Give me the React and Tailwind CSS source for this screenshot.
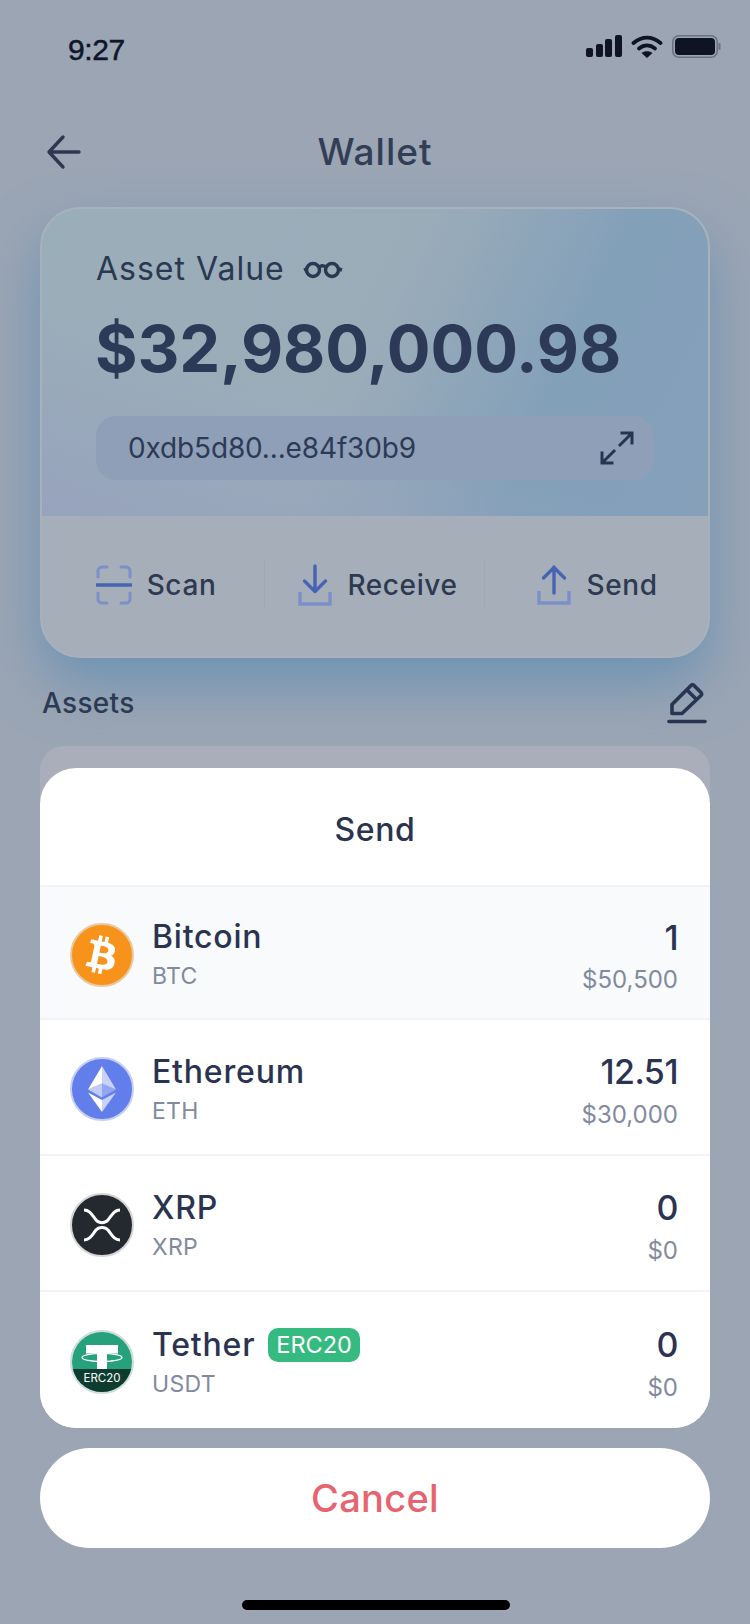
import React from 'react';
import { FaBtc } from 'react-icons/fa';

const StatusBar = () => (
  <div className="flex items-center justify-between h-[100px] pl-[68px] pr-[29px]">
    <span className="pb-[2px] font-['Liberation_Sans',sans-serif] text-[30px] tracking-[-0.4px] text-[#10162a] [-webkit-text-stroke:0.5px_#10162a]">9:27</span>
    <div className="flex items-center gap-[9px] pb-[8px]">
      <div className="flex items-end gap-[2.7px] h-[22px]">
        <div className="w-[7px] h-[9px] rounded-[2px] bg-[#0f1424]" />
        <div className="w-[7px] h-[13px] rounded-[2px] bg-[#0f1424]" />
        <div className="w-[7px] h-[18px] rounded-[2px] bg-[#0f1424]" />
        <div className="w-[7px] h-[22px] rounded-[2px] bg-[#0f1424]" />
      </div>
      <svg width="32" height="23" viewBox="0 0 32 23" fill="none" stroke="#0f1424" strokeWidth="3.800" strokeLinecap="round">
        <path d="M2.500 8C11 1 21 1 29.500 8" />
        <path d="M8 13.500C13 9.500 19 9.500 24 13.500" />
        <path d="M16 23l-5.500-5c3-2.500 8-2.500 11 0z" fill="#0f1424" stroke="none" />
      </svg>
      <svg width="49" height="23" viewBox="0 0 49 23">
        <rect x="0.800" y="0.800" width="44.400" height="21.400" rx="6" fill="none" stroke="#6b7280" strokeWidth="1.600" />
        <rect x="3" y="3" width="40" height="17" rx="4" fill="#0f1424" />
        <rect x="46.500" y="8" width="2" height="7" rx="1" fill="#6b7280" />
      </svg>
    </div>
  </div>
);

const ScanIcon = () => (
  <svg width="36" height="40" viewBox="0 0 36 40" fill="none" strokeWidth="3" strokeLinecap="round">
    <path d="M2 12V6a4 4 0 0 1 4-4h5M25 2h5a4 4 0 0 1 4 4v6M2 28v6a4 4 0 0 0 4 4h5M25 38h5a4 4 0 0 0 4-4v-6" stroke="#7b90c8" />
    <path d="M1 20h34" stroke="#4763b4" strokeWidth="3.600" />
  </svg>
);

const ReceiveIcon = () => (
  <svg width="34" height="42" viewBox="0 0 34 42" fill="none" strokeWidth="3.400" strokeLinecap="round" strokeLinejoin="round">
    <path d="M2 28v12h30V28" stroke="#7b90c8" strokeLinecap="butt" strokeLinejoin="miter" />
    <path d="M17 2v25M6.500 17L17 27.500 27.500 17" stroke="#4763b4" />
  </svg>
);

const SendIcon = () => (
  <svg width="34" height="40" viewBox="0 0 34 40" fill="none" strokeWidth="3.400" strokeLinecap="round" strokeLinejoin="round">
    <path d="M2 26v12h30V26" stroke="#7b90c8" strokeLinecap="butt" strokeLinejoin="miter" />
    <path d="M17 28V2M6.500 13L17 2.500 27.500 13" stroke="#4763b4" />
  </svg>
);

const Action = ({ icon, label, className }) => (
  <div className={`flex items-center justify-center gap-[15px] ${className}`}>
    {icon}
    <span className="text-[28px] font-medium tracking-[0.6px] text-[#2e3a52]">{label}</span>
  </div>
);

const WalletCard = () => (
  <div className="mx-10 h-[451px] rounded-[40px] overflow-hidden border-2 border-[#a7b2bd] bg-[#a6aeba] shadow-[0_26px_56px_-2px_#6b92b3]">
    <div className="h-[307px] pt-[37px] pl-[54px] bg-[linear-gradient(20deg,#97a3bd_0%,rgba(151,163,189,0)_40%),linear-gradient(115deg,#9aaeb9_0%,#9bacb9_48%,#83a0b9_74%,#86a0ba_100%)]">
      <div className="flex items-center gap-[18px] h-[46px]">
        <span className="text-[32px] tracking-[1px] text-[#2a3852]">Asset Value</span>
        <svg width="40" height="22" viewBox="0 0 40 22" fill="none" stroke="#2a3852" strokeWidth="3.500">
          <circle cx="10" cy="12" r="6.500" />
          <circle cx="29" cy="12" r="6.500" />
          <path d="M16 9c2-1.500 5-1.500 7 0M3.500 11L1 12M35.500 11L39 12" />
        </svg>
      </div>
      <div className="mt-[18px] -ml-[1px] h-[78px] flex items-center text-[65px] font-bold tracking-[-0.1px] text-[#2c3a57] whitespace-nowrap">$32,980,000.98</div>
      <div className="mt-[28px] h-[64px] w-[558px] rounded-[20px] flex items-center justify-between pl-[32px] pr-[20px] bg-[#8f9fb8]">
        <span className="text-[28px] tracking-[-0.15px] text-[#2d3a56]">0xdb5d80...e84f30b9</span>
        <svg width="34" height="34" viewBox="0 0 34 34" fill="none" stroke="#263450" strokeWidth="3" strokeLinecap="square">
          <path d="M22 2h10v10M31 3L20 14M2 22v10h10M3 31l11-11" />
        </svg>
      </div>
    </div>
    <div className="flex items-center h-[140px] pb-[3px] pl-[12px] pr-[12px]">
      <Action icon={<ScanIcon />} label="Scan" className="w-[210px] pr-[6px]" />
      <div className="w-px h-[48px] bg-[#9fa9b6]" />
      <Action icon={<ReceiveIcon />} label="Receive" className="w-[219px] pl-[7px]" />
      <div className="w-px h-[48px] bg-[#9fa9b6]" />
      <Action icon={<SendIcon />} label="Send" className="flex-1 pl-[14px]" />
    </div>
  </div>
);

const BtcLogo = () => (
  <div className="w-[64px] h-[64px] rounded-full bg-[#f7931a] border-2 border-[#e6c9a5] flex items-center justify-center text-white">
    <FaBtc size={38} className="rotate-[12deg]" />
  </div>
);

const EthLogo = () => (
  <svg width="64" height="64" viewBox="0 0 64 64">
    <circle cx="32" cy="32" r="31" fill="#627eea" stroke="#c5cff3" strokeWidth="2" />
    <path d="M32 9v17.500L46 32.600z" fill="#ffffff" fillOpacity="0.650" />
    <path d="M32 9L18 32.600 32 26.500z" fill="#ffffff" />
    <path d="M32 43v12l14-19.500z" fill="#ffffff" fillOpacity="0.650" />
    <path d="M32 43v12L18 35.500z" fill="#ffffff" />
    <path d="M32 40.500l14-8L32 26.500z" fill="#ffffff" fillOpacity="0.300" />
    <path d="M18 32.500l14 8v-14z" fill="#ffffff" fillOpacity="0.600" />
  </svg>
);

const XrpLogo = () => (
  <svg width="64" height="64" viewBox="0 0 64 64">
    <circle cx="32" cy="32" r="31" fill="#23292f" stroke="#d4d5d6" strokeWidth="2" />
    <path d="M14 17C20 17 22 22 26 27C29 30.500 35 30.500 38 27C42 22 44 17 50 17" fill="none" stroke="#ffffff" strokeWidth="3" />
    <path d="M14 47C20 47 22 42 26 37C29 33.500 35 33.500 38 37C42 42 44 47 50 47" fill="none" stroke="#ffffff" strokeWidth="3" />
  </svg>
);

const UsdtLogo = () => (
  <svg width="64" height="64" viewBox="0 0 64 64">
    <defs>
      <clipPath id="tether-clip">
        <circle cx="32" cy="32" r="30" />
      </clipPath>
    </defs>
    <circle cx="32" cy="32" r="31" fill="#ffffff" stroke="#cfdcd7" strokeWidth="2" />
    <g clipPath="url(#tether-clip)">
      <rect width="64" height="64" fill="#26a17b" />
      <rect y="39" width="64" height="25" fill="#0e3d2f" />
      <path d="M16 15h32v8.500H37V39H27V23.500H16z" fill="#ffffff" />
      <ellipse cx="32" cy="27.500" rx="20" ry="4" fill="none" stroke="#ffffff" strokeWidth="1.200" />
      <text x="32" y="52" textAnchor="middle" fontSize="11.500" fontFamily="Inter" fill="#ffffff">ERC20</text>
    </g>
  </svg>
);

const coins = [
  { name: 'Bitcoin', code: 'BTC', amount: '1', value: '$50,500', logo: <BtcLogo />, bg: 'bg-[#f8fafc]', h: 'h-[133px]' },
  { name: 'Ethereum', code: 'ETH', amount: '12.51', value: '$30,000', logo: <EthLogo />, bg: 'bg-white', h: 'h-[136px]' },
  { name: 'XRP', code: 'XRP', amount: '0', value: '$0', logo: <XrpLogo />, bg: 'bg-white', h: 'h-[136px]' },
  { name: 'Tether', code: 'USDT', amount: '0', value: '$0', logo: <UsdtLogo />, bg: 'bg-white', h: 'h-[138px]', badge: 'ERC20' },
];

const CoinRow = ({ coin }) => (
  <div className={`flex items-center border-t-2 border-[#f1f3f6] pl-[30px] pr-[32px] ${coin.bg} ${coin.h}`}>
    <div className="pt-[4px]">{coin.logo}</div>
    <div className="ml-[18px] flex-1 pt-[6px]">
      <div className="flex items-center gap-[13px] h-[40px]">
        <span className="text-[32px] font-medium tracking-[0.8px] text-[#2a3450]">{coin.name}</span>
        {coin.badge && (
          <span className="h-[34px] px-[8px] rounded-[10px] bg-[#35bb7f] text-white text-[23.500px] flex items-center">{coin.badge}</span>
        )}
      </div>
      <div className="mt-[2px] text-[23px] tracking-[0.3px] text-[#828a9e]">{coin.code}</div>
    </div>
    <div className="text-right pt-[10px]">
      <div className="h-[40px] flex items-center justify-end text-[34px] font-medium tracking-[-0.5px] text-[#2a3450]">{coin.amount}</div>
      <div className="mt-[5px] text-[24px] text-[#828a9e]">{coin.value}</div>
    </div>
  </div>
);

const SendSheet = () => (
  <div className="absolute left-10 right-10 top-[768px]">
    <div className="rounded-[36px] overflow-hidden bg-white">
      <div className="h-[117px] pt-[6px] flex items-center justify-center text-[32px] font-medium tracking-[0.6px] text-[#2a3450]">Send</div>
      {coins.map((coin) => (
        <CoinRow key={coin.name} coin={coin} />
      ))}
    </div>
    <div className="mt-[20px] h-[100px] rounded-[50px] bg-white flex items-center justify-center text-[38px] font-medium tracking-[0.3px] text-[#e8636f]">Cancel</div>
    <div className="mt-[52px] ml-[202px] w-[268px] h-[10px] rounded-full bg-black" />
  </div>
);

export default function App() {
  return (
    <div className="relative w-[750px] h-[1624px] overflow-hidden bg-[#9ba5b4] font-['Inter',sans-serif]">
      <StatusBar />
      <div className="flex items-center justify-between h-[107px] pl-[46px] pr-[46px] pb-[4px]">
        <svg width="36" height="36" viewBox="0 0 36 36" fill="none" stroke="#2d3850" strokeWidth="3.400" strokeLinecap="round" strokeLinejoin="round">
          <path d="M33 18H3M17 3L3 18l14 15" />
        </svg>
        <span className="text-[37px] font-medium tracking-[1px] text-[#323d56]">Wallet</span>
        <div className="w-[36px]" />
      </div>
      <WalletCard />
      <div className="flex items-center justify-between pl-[42px] pr-[43px] h-[88px] pt-[1px]">
        <span className="text-[28px] font-medium tracking-[0.3px] text-[#2c3a52]">Assets</span>
        <svg width="40" height="42" viewBox="0 0 40 42" fill="none" stroke="#283450" strokeWidth="3.600" strokeLinejoin="round">
          <path d="M5 31.500V22.500L24 3.500a2 2 0 0 1 3 0L34 10.500a2 2 0 0 1 0 3L15 31.500Z" />
          <path d="M20 8l10 10" />
          <path d="M2 39.500h36" strokeLinecap="round" />
        </svg>
      </div>
      <div className="mx-10 h-[60px] rounded-t-[24px] bg-[#aaaeba]" />
      <SendSheet />
    </div>
  );
}
